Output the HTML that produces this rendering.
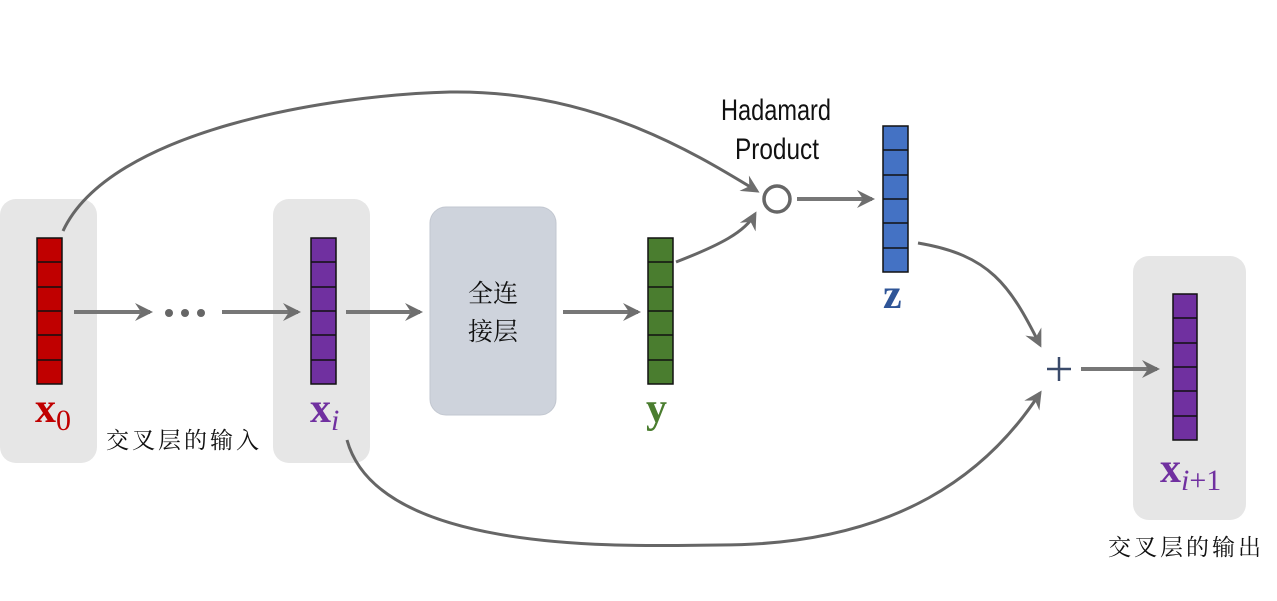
<!DOCTYPE html>
<html><head><meta charset="utf-8"><style>html,body{margin:0;padding:0;background:#fff}svg{display:block}</style></head><body>
<svg width="1277" height="601" viewBox="0 0 1277 601" xmlns="http://www.w3.org/2000/svg">
<defs>
<marker id="b" viewBox="0 0 12 12" refX="10" refY="6" markerWidth="18" markerHeight="18" orient="auto" markerUnits="userSpaceOnUse">
<path d="M0,0 L12,6 L0,12 L4,6 Z" fill="#6e6e6e"/>
</marker>
</defs>
<rect x="0" y="199" width="97" height="264" rx="16" fill="#e6e6e6"/>
<rect x="273" y="199" width="97" height="264" rx="16" fill="#e6e6e6"/>
<rect x="1133" y="256" width="113" height="264" rx="16" fill="#e6e6e6"/>
<rect x="430" y="207" width="126" height="208" rx="16" fill="#ced3dc" stroke="#c2c7d0"/>
<text x="493" y="302" text-anchor="middle" font-family="Noto Serif CJK SC, serif" font-size="25" fill="#111">全连</text>
<text x="493" y="340" text-anchor="middle" font-family="Noto Serif CJK SC, serif" font-size="25" fill="#111">接层</text>
<g stroke="#111" stroke-width="1.5">
<g fill="#c00000"><rect x="37" y="238" width="25" height="146"/></g>
<g fill="#7030a0"><rect x="311" y="238" width="25" height="146"/><rect x="1173" y="294" width="24" height="146"/></g>
<g fill="#4a7d2f"><rect x="648" y="238" width="25" height="146"/></g>
<g fill="#4472c4"><rect x="883" y="126" width="25" height="146"/></g>
<path fill="none" d="M37 262h25M37 287h25M37 311h25M37 335h25M37 360h25 M311 262h25M311 287h25M311 311h25M311 335h25M311 360h25 M648 262h25M648 287h25M648 311h25M648 335h25M648 360h25 M883 150h25M883 175h25M883 199h25M883 223h25M883 248h25 M1173 318h24M1173 343h24M1173 367h24M1173 391h24M1173 416h24"/>
</g>
<g stroke="#777" stroke-width="4" fill="none" marker-end="url(#b)">
<path d="M74 312H150"/><path d="M222 312H298"/><path d="M346 312H420"/><path d="M563 312H638"/><path d="M797 199H872"/><path d="M1081 369H1157"/>
</g>
<g fill="#666"><circle cx="169" cy="313" r="4"/><circle cx="185" cy="313" r="4"/><circle cx="201" cy="313" r="4"/></g>
<g stroke="#666" stroke-width="3" fill="none" marker-end="url(#b)">
<path d="M63 231C110 130 330 95 450 92C590 90 690 150 757 191"/>
<path d="M676 262C720 245 745 232 755 214"/>
<path d="M918 243C990 255 1010 285 1040 345"/>
<path d="M347 440C380 560 650 545 720 545C900 545 990 470 1040 393"/>
</g>
<circle cx="777" cy="199" r="13" fill="#fff" stroke="#666" stroke-width="3.5"/>
<path d="M1047 369h24M1059 357v24" stroke="#3a4a6a" stroke-width="2.5"/>
<text x="776" y="120" text-anchor="middle" font-family="Liberation Sans Narrow, Liberation Sans, sans-serif" font-size="30" textLength="110" lengthAdjust="spacingAndGlyphs" fill="#111">Hadamard</text>
<text x="777" y="159" text-anchor="middle" font-family="Liberation Sans Narrow, Liberation Sans, sans-serif" font-size="30" textLength="84" lengthAdjust="spacingAndGlyphs" fill="#111">Product</text>
<g font-family="Liberation Serif, serif" font-weight="bold" font-size="42">
<text x="35" y="422" fill="#c00000">x<tspan font-weight="normal" font-size="30" dy="8">0</tspan></text>
<text x="310" y="422" fill="#7030a0">x<tspan font-weight="normal" font-style="italic" font-size="30" dy="8">i</tspan></text>
<text x="646" y="422" fill="#4a7d2f">y</text>
<text x="883" y="308" fill="#2f5597">z</text>
<text x="1160" y="482" fill="#7030a0">x<tspan font-weight="normal" font-style="italic" font-size="30" dy="8">i</tspan><tspan font-weight="normal" font-size="30">+1</tspan></text>
</g>
<text x="106" y="448" font-family="Noto Serif CJK SC, serif" font-size="23" letter-spacing="3" fill="#111">交叉层的输入</text>
<text x="1108" y="555" font-family="Noto Serif CJK SC, serif" font-size="23" letter-spacing="3" fill="#111">交叉层的输出</text>
</svg>
</body></html>
